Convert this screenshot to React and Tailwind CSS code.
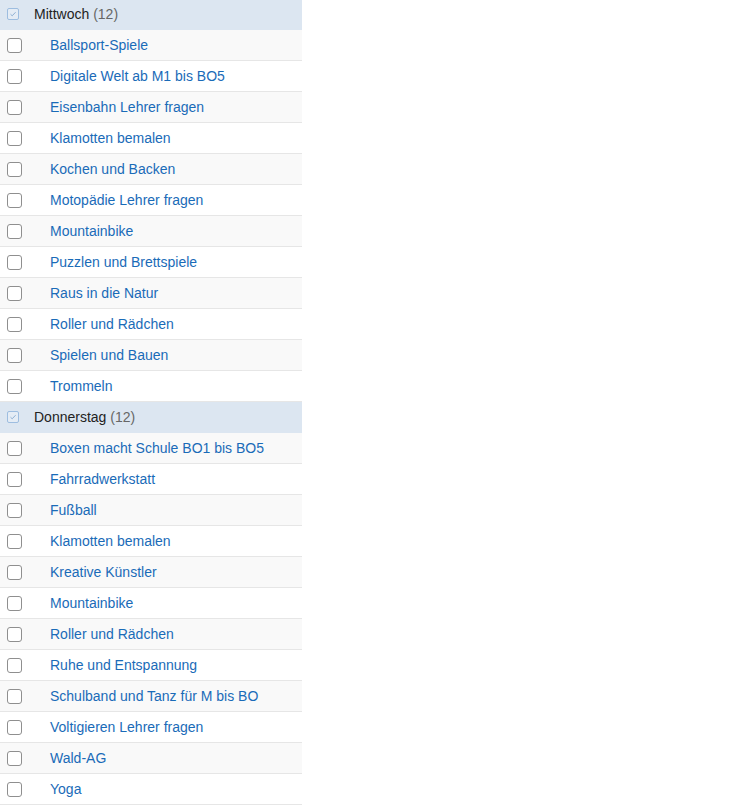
const groups = [
  {
    day: "Mittwoch",
    items: [
      "Ballsport-Spiele",
      "Digitale Welt ab M1 bis BO5",
      "Eisenbahn Lehrer fragen",
      "Klamotten bemalen",
      "Kochen und Backen",
      "Motopädie Lehrer fragen",
      "Mountainbike",
      "Puzzlen und Brettspiele",
      "Raus in die Natur",
      "Roller und Rädchen",
      "Spielen und Bauen",
      "Trommeln",
    ],
  },
  {
    day: "Donnerstag",
    items: [
      "Boxen macht Schule BO1 bis BO5",
      "Fahrradwerkstatt",
      "Fußball",
      "Klamotten bemalen",
      "Kreative Künstler",
      "Mountainbike",
      "Roller und Rädchen",
      "Ruhe und Entspannung",
      "Schulband und Tanz für M bis BO",
      "Voltigieren Lehrer fragen",
      "Wald-AG",
      "Yoga",
    ],
  },
];

function GroupCheck() {
  return (
    <span className="flex h-[12px] w-[12px] items-center justify-center rounded-[2px] border border-[#9dbde0] bg-[#e4ecf5]">
      <svg width="8" height="8" viewBox="0 0 8 8" fill="none">
        <path d="M1.5 4.2 3.2 5.8 6.6 2.2" stroke="#8fb0d4" strokeWidth="1" />
      </svg>
    </span>
  );
}

export default function App() {
  return (
    <div className="min-h-screen overflow-hidden bg-white" style={{ fontFamily: '"Liberation Sans", Arial, sans-serif' }}>
      {/* list is scrolled by one pixel in the shot */}
      <div className="-mt-px w-[302px] text-[14px]">
        {groups.map((g) => (
          <div key={g.day}>
            <div className="flex h-[31px] items-center border-b border-[#dce6f1] bg-[#dce6f1] pl-[7px]">
              <GroupCheck />
              <span className="ml-[15px] text-[#222]">
                {g.day} <span className="text-[#666]">({g.items.length})</span>
              </span>
            </div>
            {g.items.map((item, i) => (
              <div
                key={item}
                className={`flex h-[31px] items-center border-b border-[#e6e6e6] pl-[7px] ${i % 2 === 0 ? "bg-[#f9f9f9]" : "bg-white"}`}
              >
                <span className="h-[15px] w-[15px] rounded-[3px] border border-[#8f8f8f] bg-white" />
                <span className="ml-[28px] text-[#1a6bb8]">{item}</span>
              </div>
            ))}
          </div>
        ))}
      </div>
    </div>
  );
}
